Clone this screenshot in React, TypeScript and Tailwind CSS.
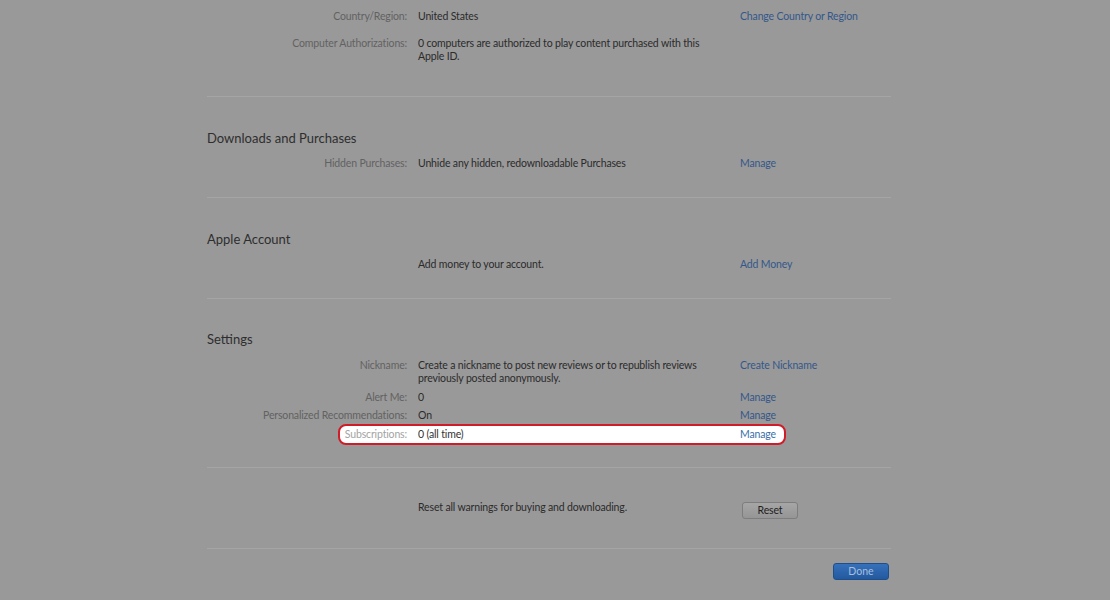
import React from "react";

const font = { fontFamily: 'Lato, "Open Sans", Arial, sans-serif' };

function Row({
  label,
  value,
  link,
  className = "",
}: {
  label?: string;
  value: React.ReactNode;
  link?: string;
  className?: string;
}) {
  return (
    <div className={`grid grid-cols-[211px_322px_1fr] text-[10.5px] leading-[13px] tracking-[-0.15px] ${className}`}>
      <div className="pr-[11px] text-right text-[#626262]">{label ? `${label}:` : ""}</div>
      <div className="pr-[30px] text-[#2b2b2b]">{value}</div>
      <div className="text-[#34578a]">{link}</div>
    </div>
  );
}

export default function App() {
  return (
    <div className="min-h-[600px] w-full bg-[#999999]" style={font}>
      <div className="ml-[207px] w-[684px]">
        {/* Section 1 */}
        <div className="border-b border-[#a5a5a5] pt-[10px] pb-[33px]">
          <Row label="Country/Region" value="United States" link="Change Country or Region" />
          <Row
            className="mt-[14px]"
            label="Computer Authorizations"
            value="0 computers are authorized to play content purchased with this Apple ID."
          />
        </div>

        {/* Downloads and Purchases */}
        <div className="border-b border-[#a5a5a5] pt-[32px] pb-[27px]">
          <div className="text-[13px] leading-[18px] text-[#2e2e2e]">Downloads and Purchases</div>
          <Row
            className="mt-[10px]"
            label="Hidden Purchases"
            value="Unhide any hidden, redownloadable Purchases"
            link="Manage"
          />
        </div>

        {/* Apple Account */}
        <div className="border-b border-[#a5a5a5] pt-[32px] pb-[27px]">
          <div className="text-[13px] leading-[18px] text-[#2e2e2e]">Apple Account</div>
          <Row className="mt-[10px]" value="Add money to your account." link="Add Money" />
        </div>

        {/* Settings */}
        <div className="border-b border-[#a5a5a5] pt-[31px] pb-[26px]">
          <div className="text-[13px] leading-[18px] text-[#2e2e2e]">Settings</div>
          <Row
            className="mt-[11px]"
            label="Nickname"
            value="Create a nickname to post new reviews or to republish reviews previously posted anonymously."
            link="Create Nickname"
          />
          <Row className="mt-[6px]" label="Alert Me" value="0" link="Manage" />
          <Row className="mt-[5px]" label="Personalized Recommendations" value="On" link="Manage" />
          <div className="relative mt-[6px]">
            <div className="absolute left-[131px] top-[-4px] h-[21px] w-[448px] rounded-[8px] border-2 border-[#d01c28] bg-white" />
            <div className="relative grid grid-cols-[211px_322px_1fr] text-[10.5px] leading-[13px] tracking-[-0.15px]">
              <div className="pr-[11px] text-right text-[#a3a3a3]">Subscriptions:</div>
              <div className="text-[#333333]">0 (all time)</div>
              <div className="text-[#3a6ea8]">Manage</div>
            </div>
          </div>
        </div>

        {/* Reset */}
        <div className="border-b border-[#a5a5a5] pt-[33px] pb-[29px]">
          <div className="grid grid-cols-[211px_324px_1fr] text-[10.5px] leading-[13px] tracking-[-0.15px]">
            <div />
            <div className="text-[#2b2b2b]">Reset all warnings for buying and downloading.</div>
            <div>
              <button className="mt-[1px] flex h-[17px] w-[56px] items-center justify-center rounded-[3px] border border-[#7d7d7d] bg-gradient-to-b from-[#a6a6a6] to-[#959595] text-[10.5px] leading-[13px] text-[#1e1e1e]">
                Reset
              </button>
            </div>
          </div>
        </div>

        <div className="mt-[14px] flex justify-end pr-[2px]">
          <button className="flex h-[17px] w-[56px] items-center justify-center rounded-[3px] border border-[#1e4f8c] bg-gradient-to-b from-[#3571bb] to-[#24599e] text-[10.5px] leading-[13px] text-[#a7bfdd]">
            Done
          </button>
        </div>
      </div>
    </div>
  );
}
